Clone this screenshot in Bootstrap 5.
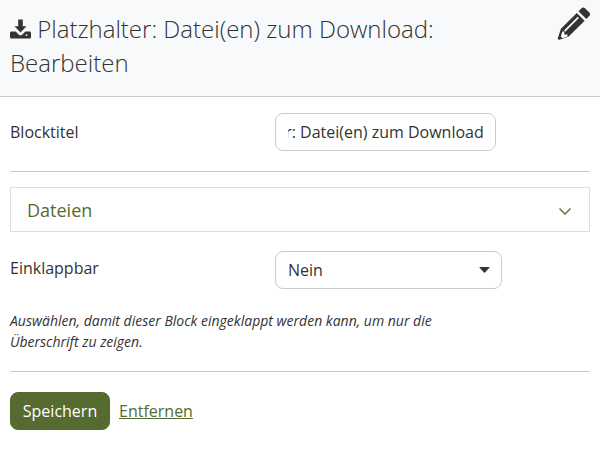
<!DOCTYPE html>
<html lang="de">
<head>
<meta charset="utf-8">
<title>Block bearbeiten</title>
<link href="https://cdn.jsdelivr.net/npm/bootstrap@5.3.0/dist/css/bootstrap.min.css" rel="stylesheet">
<style>
html,body{height:100%;overflow:hidden}
body{font-family:"Open Sans",sans-serif;font-size:16px;line-height:1.5;color:#333;background:#fff}
.pane-head{background:#f8f9fa;border-bottom:1px solid #ccc;height:97px;padding:12px 10px 0;position:relative}
.pane-title{font-family:"Open Sans",sans-serif;font-weight:300;font-size:24px;line-height:34px;color:#333;margin:0;padding-right:150px}
.ico-dl{width:21px;height:20px;fill:#333;vertical-align:-1px}
.ico-edit{position:absolute;right:9px;top:7px;width:34px;height:34px;fill:#333}
.pane-body{padding:16px 10px 0}
.field-row{display:flex;align-items:flex-start}
.field-label{width:265px;flex:none;margin:0;padding-top:7px;line-height:24px;font-size:16px}
.row-b .field-label{padding-top:5px}
.field-input.form-control{width:221px;height:38px;padding:6px 11px 6px 12px;font-size:16px;color:#333;border-color:#ccc;border-radius:8px;background:#fff}
.field-select.form-select{width:227px;height:38px;padding:6px 12px;font-size:16px;color:#333;border-color:#ccc;border-radius:8px;background-size:11px 6px;background-position:right 11px center;
background-image:url("data:image/svg+xml,%3csvg xmlns='http://www.w3.org/2000/svg' viewBox='0 0 11 6'%3e%3cpath fill='%23333' d='M1 0h9q1 0 .4.7L6 5.600q-.5.4-1 0L.6.700Q0 0 1 0z'/%3e%3c/svg%3e")}
.sep{border:0;border-top:1px solid #ccc;opacity:1;margin:0}
.sep-a{margin-top:20px}
.fold-box{margin-top:15px;height:45px;border:1px solid #ddd;display:flex;align-items:center;justify-content:space-between;padding:1px 17px 0 16px;color:#556b2f;font-size:18px}
.fold-ico{width:14px;height:9px;fill:none;stroke:#6b7f49;stroke-width:1.6;margin-top:2px}
.row-b{margin-top:19px}
.hint-text{margin:21px 0 0;font-size:14px;font-style:italic;line-height:21px;color:#333;max-width:470px}
.sep-b{margin-top:19px}
.act-row{margin-top:20px;display:flex;align-items:center;gap:9px}
.btn-save.btn{background:#556b2f;border:1px solid #556b2f;color:#fff;width:100px;height:38px;padding:0;font-size:16px;border-radius:8px}
.lnk-remove{color:#556b2f;font-size:16px;text-decoration:underline}
</style>
</head>
<body>
<div class="pane-head">
  <h1 class="pane-title"><svg class="ico-dl" viewBox="0 0 22 20" aria-hidden="true"><path d="M8.6 0h4.8v7h3.9L11 13.6 4.7 7h3.9z"/><path d="M0 14.3c0-.9.7-1.6 1.6-1.6h4.3L9.300 16c.9.8 2.500.8 3.400 0l3.400-3.300h4.300c.9 0 1.600.7 1.600 1.600v4c0 .9-.7 1.700-1.600 1.700H1.600C.7 20 0 19.200 0 18.300zm16.300 2.100a1 1 0 1 0 2 0 1 1 0 1 0-2 0z"/></svg> Platzhalter: Datei(en) zum Download: Bearbeiten</h1>
  <svg class="ico-edit" viewBox="0 0 34 34" aria-hidden="true"><path fill-rule="evenodd" d="M24.500 1.200c1-1 2.500-1 3.500 0l4.300 4.300c1 1 1 2.500 0 3.500l-3 3-7.800-7.800zM19.800 5.900l7.800 7.800-15.900 15.900-9.200 3.100c-1 .3-2-.6-1.600-1.600l3-9.300zM20.700 9.800 7 23.500l1.200 1.200L21.900 11zM5.300 24.600l-1.500 5 1.700 1.600 5-1.600v-2.200H7.300v-2.800z"/></svg>
</div>
<div class="pane-body">
  <div class="field-row">
    <label class="field-label" for="t1">Blocktitel</label>
    <input id="t1" class="form-control field-input" type="text" value="Platzhalter: Datei(en) zum Download">
  </div>
  <hr class="sep sep-a">
  <div class="fold-box"><span>Dateien</span><svg class="fold-ico" viewBox="0 0 14 9" aria-hidden="true"><path d="M1.500 1.500 7 7l5.500-5.500"/></svg></div>
  <div class="field-row row-b">
    <label class="field-label" for="s1">Einklappbar</label>
    <select id="s1" class="form-select field-select"><option>Nein</option><option>Ja</option></select>
  </div>
  <p class="hint-text">Auswählen, damit dieser Block eingeklappt werden kann, um nur die Überschrift zu zeigen.</p>
  <hr class="sep sep-b">
  <div class="act-row">
    <button type="button" class="btn btn-save">Speichern</button>
    <a href="#" class="lnk-remove">Entfernen</a>
  </div>
</div>
<script src="https://cdn.jsdelivr.net/npm/bootstrap@5.3.0/dist/js/bootstrap.bundle.min.js"></script>
<script>document.getElementById('t1').scrollLeft=9999;</script>
</body>
</html>
